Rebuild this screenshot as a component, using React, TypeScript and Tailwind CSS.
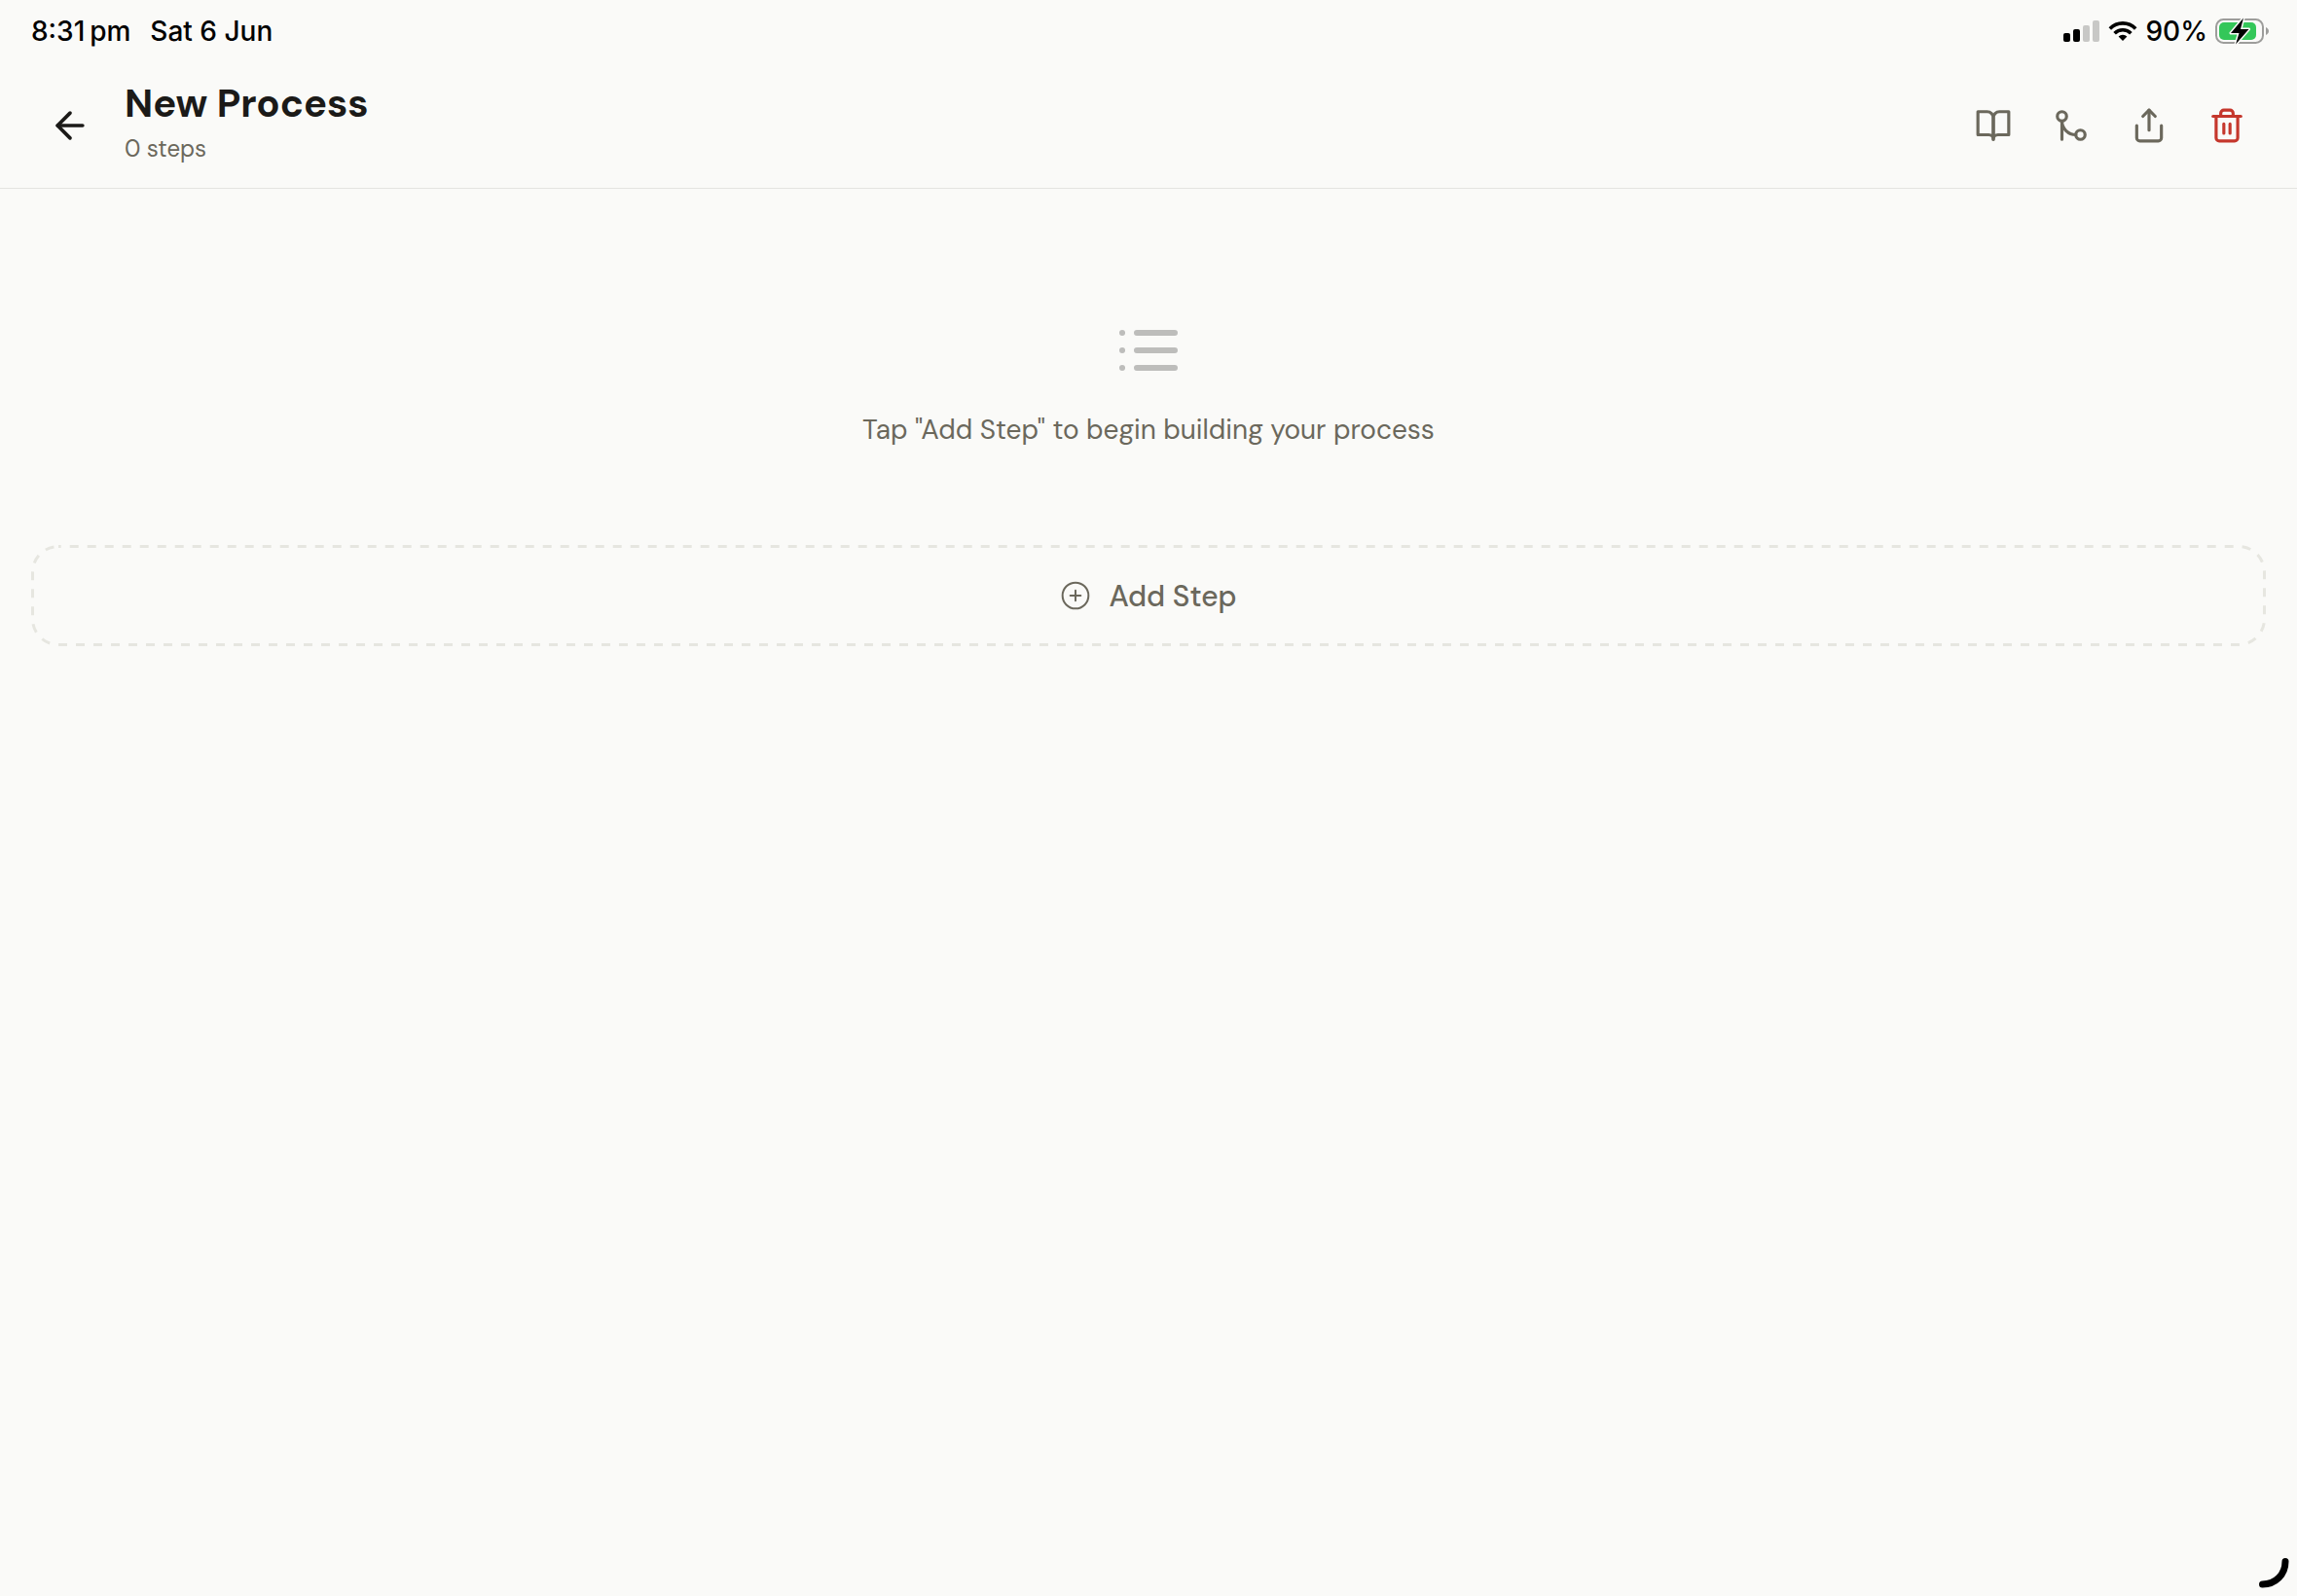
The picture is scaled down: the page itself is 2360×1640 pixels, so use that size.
import { ArrowLeft } from 'lucide-react';
import type { ReactNode } from 'react';

interface HeaderActionProps {
  label: string;
  danger?: boolean;
  children: ReactNode;
}

function HeaderAction({ label, danger = false, children }: HeaderActionProps) {
  return (
    <button
      type="button"
      aria-label={label}
      className={`flex size-20 items-center justify-center ${danger ? 'text-[#c5372c]' : 'text-[#6b685c]'}`}
    >
      <svg
        viewBox="0 0 24 24"
        fill="none"
        stroke="currentColor"
        strokeWidth="2"
        strokeLinecap="round"
        strokeLinejoin="round"
        className="size-[38px]"
      >
        {children}
      </svg>
    </button>
  );
}

function SignalIcon() {
  return (
    <svg viewBox="0 0 38 22" className="h-[22px] w-[38px]">
      <rect x="0" y="13" width="7" height="9" rx="2" fill="#000" />
      <rect x="10" y="9" width="7" height="13" rx="2" fill="#000" />
      <rect x="20" y="5" width="7" height="17" rx="2" fill="#c8c8c6" />
      <rect x="30" y="0" width="7" height="22" rx="2" fill="#c8c8c6" />
    </svg>
  );
}

function WifiIcon() {
  return (
    <svg viewBox="0 0 30 20" className="h-5 w-[30px]">
      <g fill="none" stroke="#000" strokeWidth="3.6">
        <path d="M1.8 7.4a18.6 18.6 0 0 1 26.4 0" />
        <path d="M6.6 12.2a11.9 11.9 0 0 1 16.8 0" />
      </g>
      <path d="M15 20l-4.4-4.4a6.3 6.3 0 0 1 8.8 0z" fill="#000" />
    </svg>
  );
}

function BatteryIcon() {
  return (
    <svg viewBox="0 0 56 28" className="h-7 w-14">
      <rect x="1" y="2" width="48" height="24" rx="7.5" fill="none" stroke="#9d9d9b" strokeWidth="2" />
      <path d="M52 10v8c1.8-.8 3-2.3 3-4s-1.2-3.2-3-4z" fill="#9d9d9b" />
      <rect x="4" y="5" width="38" height="18" rx="5" fill="#34c759" />
      <path
        d="M29 0.5L16 16h8.5l-3.5 11.5L34.5 12H26z"
        fill="#000"
        stroke="#fafaf8"
        strokeWidth="3"
        strokeLinejoin="round"
        paintOrder="stroke"
      />
    </svg>
  );
}

function StatusBar() {
  return (
    <div className="flex h-16 items-center justify-between pr-7 pl-8 font-[Inter,sans-serif] text-[28px] font-medium text-black">
      <div className="flex gap-5">
        <span>8:31{'\u202f'}pm</span>
        <span>Sat 6 Jun</span>
      </div>
      <div className="flex items-center gap-2">
        <SignalIcon />
        <WifiIcon />
        <span>90%</span>
        <BatteryIcon />
      </div>
    </div>
  );
}

export default function App() {
  return (
    <div className="relative min-h-screen bg-[#fafaf8] font-['DM_Sans',Inter,sans-serif] text-[#6b685c]">
      <StatusBar />

      <header className="flex items-center border-b border-[#e4e4e0] px-8 py-4">
        <button type="button" aria-label="Back" className="flex size-20 items-center justify-center text-[#1b1a18]">
          <ArrowLeft size={44} strokeWidth={2} />
        </button>
        <div className="ml-4 flex-1 pb-2">
          <h1 className="text-[40px] leading-[52px] font-bold text-[#1b1a18]">New Process</h1>
          <p className="mt-1 text-2xl leading-[33px]">0 steps</p>
        </div>

        <HeaderAction label="Guide">
          <path d="M2 3h6a4 4 0 0 1 4 4v14a3 3 0 0 0-3-3H2z" />
          <path d="M22 3h-6a4 4 0 0 0-4 4v14a3 3 0 0 1 3-3h7z" />
        </HeaderAction>
        <HeaderAction label="Merge">
          <circle cx="18" cy="18" r="3" />
          <circle cx="6" cy="6" r="3" />
          <path d="M6 21V9a9 9 0 0 0 9 9" />
        </HeaderAction>
        <HeaderAction label="Share">
          <path d="M4 12v8a2 2 0 0 0 2 2h12a2 2 0 0 0 2-2v-8" />
          <path d="M16 6l-4-4-4 4" />
          <path d="M12 2v13" />
        </HeaderAction>
        <HeaderAction label="Delete" danger>
          <path d="M3 6h18" />
          <path d="M19 6v14a2 2 0 0 1-2 2H7a2 2 0 0 1-2-2V6m3 0V4a2 2 0 0 1 2-2h4a2 2 0 0 1 2 2v2" />
          <path d="M10 11v6" />
          <path d="M14 11v6" />
        </HeaderAction>
      </header>

      <main className="px-8">
        {/* Empty state */}
        <div className="flex flex-col items-center gap-6 pt-[130px] pb-24">
          <svg
            viewBox="0 0 24 24"
            fill="none"
            stroke="#bdbdbb"
            strokeWidth="2"
            strokeLinecap="round"
            className="size-[72px]"
          >
            <path d="M8 6h13M8 12h13M8 18h13M3 6h.01M3 12h.01M3 18h.01" />
          </svg>
          <p className="text-[28px] leading-11">Tap "Add Step" to begin building your process</p>
        </div>

        <button
          type="button"
          className="relative flex h-[104px] w-full items-center justify-center gap-[18px] text-[30px] font-medium"
        >
          {/* Dashed outline */}
          <svg className="absolute inset-0 size-full" fill="none">
            <rect
              x="1.5"
              y="1.5"
              rx="26.5"
              stroke="#e6e6e0"
              strokeWidth="3"
              strokeDasharray="9 9"
              strokeDashoffset="6.3"
              className="h-[calc(100%-3px)] w-[calc(100%-3px)]"
            />
          </svg>
          <svg
            viewBox="0 0 24 24"
            fill="none"
            stroke="currentColor"
            strokeWidth="1.5"
            strokeLinecap="round"
            className="size-8"
          >
            <circle cx="12" cy="12" r="10" />
            <path d="M12 8v8M8 12h8" />
          </svg>
          Add Step
        </button>
      </main>

      {/* Corner handle */}
      <svg viewBox="0 0 40 40" className="absolute right-0 bottom-0 size-10">
        <path d="M28 4.5C28 18 18 28 4.5 28" fill="none" stroke="#000" strokeWidth="7" strokeLinecap="round" />
      </svg>
    </div>
  );
}
